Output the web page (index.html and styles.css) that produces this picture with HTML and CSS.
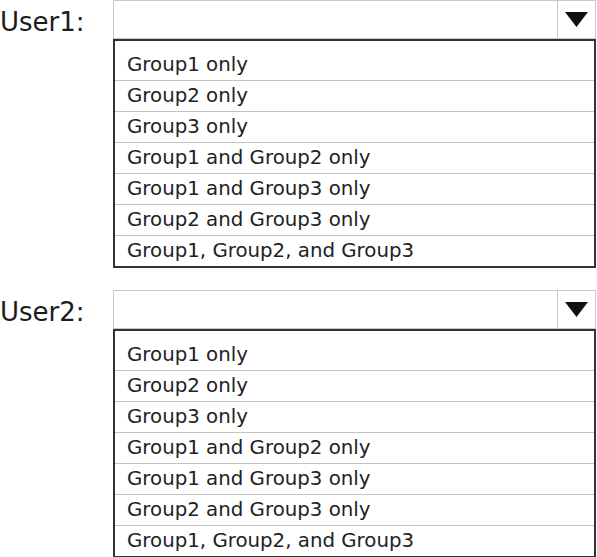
FILE: index.html
```html
<!DOCTYPE html>
<html>
<head>
  <title>User Group Membership</title>
  <meta name="viewport" content="width=device-width, initial-scale=1.0">
  <link rel="stylesheet" href="styles.css">
</head>
<body>
  <div class="field">
    <div class="field-label">User1:</div>
    <div class="field-control">
      <div class="select">
        <span class="select-value"></span>
        <span class="select-arrow">
          <svg width="23" height="15" viewBox="0 0 23 15"><polygon points="0,0 23,0 11.5,15" fill="#111"/></svg>
        </span>
      </div>
      <ul class="options">
        <li>Group1 only</li>
        <li>Group2 only</li>
        <li>Group3 only</li>
        <li>Group1 and Group2 only</li>
        <li>Group1 and Group3 only</li>
        <li>Group2 and Group3 only</li>
        <li>Group1, Group2, and Group3</li>
      </ul>
    </div>
  </div>

  <div class="field">
    <div class="field-label">User2:</div>
    <div class="field-control">
      <div class="select">
        <span class="select-value"></span>
        <span class="select-arrow">
          <svg width="23" height="15" viewBox="0 0 23 15"><polygon points="0,0 23,0 11.5,15" fill="#111"/></svg>
        </span>
      </div>
      <ul class="options">
        <li>Group1 only</li>
        <li>Group2 only</li>
        <li>Group3 only</li>
        <li>Group1 and Group2 only</li>
        <li>Group1 and Group3 only</li>
        <li>Group2 and Group3 only</li>
        <li>Group1, Group2, and Group3</li>
      </ul>
    </div>
  </div>
</body>
</html>
```

FILE: styles.css
```css
body {
  margin: 0;
  background: #fff;
  color: #1c1c1c;
  font-family: "DejaVu Sans", sans-serif;
}
.field {
  display: grid;
  grid-template-columns: 113px 483px;
  margin-bottom: 22px;
}
.field-label {
  font-size: 26px;
  line-height: 39px;
  padding-top: 3px;
}
.select {
  display: flex;
  height: 37px;
  border: 1px solid #c8c8c8;
}
.select-value {
  flex: 1;
}
.select-arrow {
  width: 37px;
  border-left: 1px solid #c8c8c8;
  display: flex;
  align-items: center;
  justify-content: center;
}
.options {
  list-style-type: none;
  margin: 0;
  padding: 9px 0 0;
  border: 2px solid #333;
}
.options li {
  height: 30px;
  line-height: 30px;
  padding-left: 12px;
  font-size: 19.8px;
  color: #222;
  border-bottom: 1px solid #c4c4c4;
}
.options li:last-child {
  border-bottom: none;
}
```
